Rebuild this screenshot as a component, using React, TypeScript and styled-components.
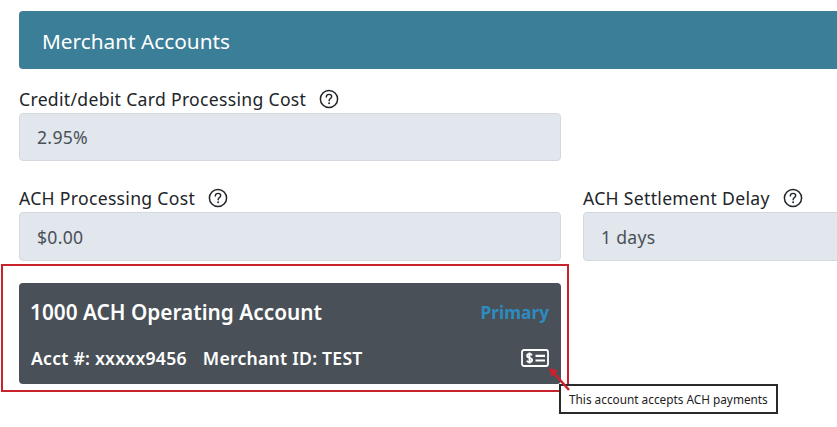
import React from "react";
import styled, { createGlobalStyle } from "styled-components";

const GlobalStyle = createGlobalStyle`
  html, body {
    margin: 0;
    padding: 0;
    background: #fff;
    overflow: hidden;
  }
  body {
    font-family: "Noto Sans", "Open Sans", sans-serif;
    color: #212529;
  }
`;

const Page = styled.div`
  position: relative;
  width: 837px;
  height: 427px;
  padding: 11px 0 0 19px;
  box-sizing: border-box;
  overflow: hidden;
`;

const Header = styled.div`
  width: 840px;
  height: 58px;
  background: #3b7e98;
  border-radius: 4px 0 0 4px;
  color: #fff;
  font-size: 20.8px;
  line-height: 60px;
  padding-left: 23px;
  box-sizing: border-box;
  margin-bottom: 18px;
`;

const Row = styled.div`
  display: grid;
  grid-template-columns: 542px 280px;
  column-gap: 22px;
  margin-bottom: 25px;
`;

const Field = styled.div`
  display: flex;
  flex-direction: column;
`;

const Label = styled.label`
  display: flex;
  align-items: center;
  height: 24px;
  margin-bottom: 2px;
  font-size: 17.6px;
  letter-spacing: 0.3px;
  line-height: 24px;
  color: #212529;
`;

const HelpWrap = styled.span`
  display: inline-flex;
  margin-left: 13px;
`;

const ReadOnly = styled.div<{ $tall?: boolean }>`
  height: ${p => (p.$tall ? 49 : 48)}px;
  background: #e2e6ed;
  border: 1px solid #d3d8df;
  border-radius: 4px;
  box-sizing: border-box;
  padding-left: 17px;
  display: flex;
  align-items: center;
  font-size: 17.6px;
  letter-spacing: 0.3px;
  color: #495057;
`;

const Card = styled.div`
  width: 542px;
  height: 101px;
  margin-top: -3px;
  background: #495057;
  border-radius: 4px;
  box-sizing: border-box;
  padding: 14px 12px 0 11px;
  color: #fff;
`;

const CardTop = styled.div`
  display: flex;
  justify-content: space-between;
  align-items: center;
  height: 30px;
  margin-bottom: 19px;
`;

const CardTitle = styled.div`
  font-size: 20.8px;
  font-weight: 600;
`;

const Primary = styled.div`
  font-size: 17.3px;
  font-weight: 700;
  color: #2e8bc0;
`;

const CardBottom = styled.div`
  display: flex;
  justify-content: space-between;
  align-items: center;
  height: 24px;
`;

const Meta = styled.div`
  display: flex;
  gap: 16px;
  padding-left: 1px;
  font-size: 17.6px;
  letter-spacing: 0.25px;
  font-weight: 600;
`;

const Callout = styled.div`
  position: absolute;
  left: 1px;
  top: 264px;
  width: 568px;
  height: 128px;
  border: 2px solid #c8232c;
  box-sizing: border-box;
  pointer-events: none;
`;

const Tooltip = styled.div`
  position: absolute;
  left: 559px;
  top: 384px;
  width: 219px;
  height: 30px;
  background: #fff;
  border: 2px solid #2a2a2a;
  box-sizing: border-box;
  padding-left: 8px;
  font-size: 11.8px;
  line-height: 26px;
  color: #222;
  white-space: nowrap;
`;

const ArrowSvg = styled.svg`
  position: absolute;
  left: 546px;
  top: 365px;
`;

const HelpIcon = () => (
  <svg width="20" height="20" viewBox="0 0 20 20" fill="none">
    <circle cx="10" cy="10" r="8.6" stroke="#212529" strokeWidth="1.5" />
    <path
      d="M7.3 8c.1-1.7 1.2-2.6 2.8-2.6 1.5 0 2.6.9 2.6 2.2 0 1-.5 1.5-1.4 2.1-.8.5-1.1.9-1.1 1.7v.4"
      stroke="#212529"
      strokeWidth="1.4"
      strokeLinecap="round"
    />
    <circle cx="10.1" cy="14.2" r="0.95" fill="#212529" />
  </svg>
);

const AchIcon = () => (
  <svg width="28" height="18" viewBox="0 0 28 18" fill="none">
    <rect x="1" y="1" width="26" height="16" rx="2" stroke="#fff" strokeWidth="1.8" />
    <path d="M14.5 6.8h9.5M14.5 11.5h9.5" stroke="#fff" strokeWidth="2.2" />
    <path
      d="M11 6.2c-.5-.8-1.4-1.2-2.5-1.2-1.4 0-2.4.7-2.4 1.9 0 2.6 5 1.4 5 4.1 0 1.2-1 2-2.6 2-1.2 0-2.2-.5-2.7-1.3M8.5 3.6v10.8"
      stroke="#fff"
      strokeWidth="1.8"
    />
  </svg>
);

const App: React.FC = () => {
  return (
    <Page>
      <GlobalStyle />
      <Header>Merchant Accounts</Header>
      <Row>
        <Field>
          <Label>
            Credit/debit Card Processing Cost
            <HelpWrap>
              <HelpIcon />
            </HelpWrap>
          </Label>
          <ReadOnly>2.95%</ReadOnly>
        </Field>
      </Row>
      <Row>
        <Field>
          <Label>
            ACH Processing Cost
            <HelpWrap>
              <HelpIcon />
            </HelpWrap>
          </Label>
          <ReadOnly $tall>$0.00</ReadOnly>
        </Field>
        <Field>
          <Label>
            ACH Settlement Delay
            <HelpWrap>
              <HelpIcon />
            </HelpWrap>
          </Label>
          <ReadOnly $tall>1 days</ReadOnly>
        </Field>
      </Row>
      <Card>
        <CardTop>
          <CardTitle>1000 ACH Operating Account</CardTitle>
          <Primary>Primary</Primary>
        </CardTop>
        <CardBottom>
          <Meta>
            <span>Acct #: xxxxx9456</span>
            <span>Merchant ID: TEST</span>
          </Meta>
          <AchIcon />
        </CardBottom>
      </Card>
      <Callout />
      <Tooltip>This account accepts ACH payments</Tooltip>
      <ArrowSvg width="28" height="32" viewBox="0 0 28 32" fill="none">
        <path d="M7 7L23 25" stroke="#c8232c" strokeWidth="2.6" />
        <path d="M3 3l9 2.5-6.5 6.5z" fill="#c8232c" />
      </ArrowSvg>
    </Page>
  );
};

export default App;
